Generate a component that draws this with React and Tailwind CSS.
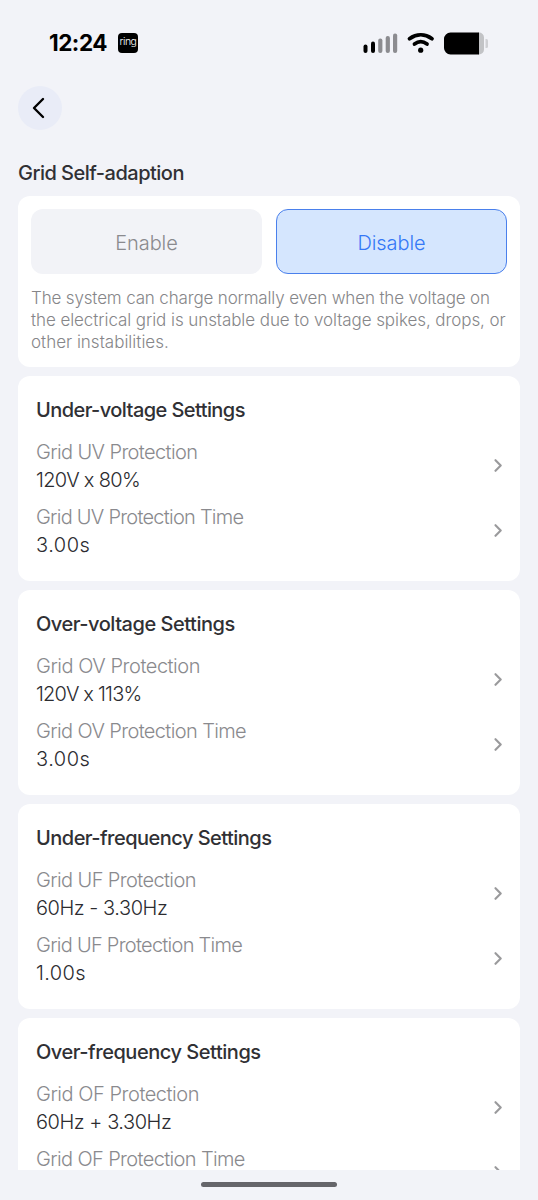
import React from "react";

const sections = [
  {
    title: "Under-voltage Settings",
    titleClass: "tracking-[-0.57px]",
    rows: [
      { label: "Grid UV Protection", labelClass: "tracking-[-0.62px]", value: "120V x 80%", valueClass: "tracking-[-0.7px]" },
      { label: "Grid UV Protection Time", labelClass: "tracking-[-0.75px]", value: "3.00s", valueClass: "tracking-[0.5px]" },
    ],
  },
  {
    title: "Over-voltage Settings",
    titleClass: "tracking-[-0.47px]",
    rows: [
      { label: "Grid OV Protection", labelClass: "tracking-[-0.46px]", value: "120V x 113%", valueClass: "tracking-[-0.8px]" },
      { label: "Grid OV Protection Time", labelClass: "tracking-[-0.62px]", value: "3.00s", valueClass: "tracking-[0.5px]" },
    ],
  },
  {
    title: "Under-frequency Settings",
    titleClass: "tracking-[-0.52px]",
    rows: [
      { label: "Grid UF Protection", labelClass: "tracking-[-0.61px]", value: "60Hz - 3.30Hz", valueClass: "tracking-[-0.46px]" },
      { label: "Grid UF Protection Time", labelClass: "tracking-[-0.73px]", value: "1.00s", valueClass: "tracking-[0.4px]" },
    ],
  },
  {
    title: "Over-frequency Settings",
    titleClass: "tracking-[-0.46px]",
    rows: [
      { label: "Grid OF Protection", labelClass: "tracking-[-0.46px]", value: "60Hz + 3.30Hz", valueClass: "tracking-[-0.46px]" },
      { label: "Grid OF Protection Time", labelClass: "tracking-[-0.63px]" },
    ],
  },
];

function StatusBar() {
  return (
    <header className="flex h-[86px] shrink-0 items-center pl-[49px] pr-[50px]">
      <span className="w-[69px] whitespace-nowrap text-[22.5px] leading-7 font-bold tracking-[-0.5px] text-black">12:24</span>
      <span className="flex h-5 w-5 items-center justify-center rounded-[4px] bg-black pb-0.5 text-[10.5px] leading-none font-light tracking-[-0.5px] text-white">ring</span>
      <svg className="ml-auto" width="125" height="24" viewBox="0 0 125 24" fill="none">
        <rect x="0.5" y="13.5" width="4" height="8.5" rx="2" fill="#000" />
        <rect x="8" y="10.5" width="4" height="11.5" rx="2" fill="#000" />
        <rect x="15.2" y="7.5" width="4.2" height="14.5" rx="2" fill="#8c8c90" />
        <rect x="22.7" y="5" width="4.2" height="17" rx="2" fill="#8c8c90" />
        <rect x="30" y="2.5" width="4.2" height="19.5" rx="2" fill="#8c8c90" />
        <g stroke="#000" strokeWidth="3.8" strokeLinecap="round">
          <path d="M46.500 7.700C53.500 2.600 62 2.600 69 7.700" />
          <path d="M51.500 13C55.500 10 60 10 64 13" />
        </g>
        <circle cx="57.7" cy="19.2" r="2.6" fill="#000" />
        <path d="M116 1.500h-1v22h1a5 5 0 0 0 5-5v-12a5 5 0 0 0-5-5Z" fill="#c2c3c6" />
        <path d="M87.500 1.500H116v22H87.500a6.500 6.500 0 0 1-6.500-6.500V8a6.500 6.500 0 0 1 6.500-6.500Z" fill="#000" />
        <path d="M122.500 8h1a1.500 1.500 0 0 1 1.500 1.500v6a1.500 1.500 0 0 1-1.500 1.500h-1Z" fill="#cfd0d4" />
      </svg>
    </header>
  );
}

function SettingRow({ row }) {
  return (
    <div className="flex h-14 justify-between">
      <div className="whitespace-nowrap text-[20px] leading-7 font-[350]">
        <div className={`text-[#8a8a8e] ${row.labelClass}`}>{row.label}</div>
        {row.value && <div className={`text-[#2c2c30] ${row.valueClass}`}>{row.value}</div>}
      </div>
      <svg className="mt-5" width="8" height="14" viewBox="0 0 8 14" fill="none" stroke="#9a9a9c" strokeWidth="2.100" strokeLinecap="round" strokeLinejoin="round">
        <path d="M1.500 2.200 6.700 7.500 1.500 12.800" />
      </svg>
    </div>
  );
}

function SettingsCard({ section }) {
  return (
    <section className="flex h-[205px] shrink-0 flex-col rounded-xl bg-white pt-5 pr-[18px] pl-[18px]">
      <h2 className={`mb-3.5 whitespace-nowrap text-[20px] leading-7 font-medium text-[#303034] ${section.titleClass}`}>{section.title}</h2>
      <div className="flex flex-col gap-[9px]">
        {section.rows.map((row) => (
          <SettingRow key={row.label} row={row} />
        ))}
      </div>
    </section>
  );
}

export default function App() {
  return (
    <div className="flex h-[1200px] w-[538px] flex-col overflow-hidden bg-[#f2f3f8] font-['Inter',sans-serif]">
      <StatusBar />
      <div className="px-[18px]">
        <button className="flex h-[44px] w-[44px] items-center justify-center rounded-full bg-[#e9ecf7]">
          <svg className="mr-1 mb-px" width="14" height="22" viewBox="0 0 14 22" fill="none" stroke="#000" strokeWidth="2.400" strokeLinecap="round" strokeLinejoin="round">
            <path d="M12 2 3 11l9 9" />
          </svg>
        </button>
        <h1 className="mt-[29px] mb-[9px] whitespace-nowrap text-[20px] leading-7 font-medium tracking-[-0.51px] text-[#303034]">Grid Self-adaption</h1>
      </div>
      <main className="flex h-[974px] shrink-0 flex-col gap-[9px] overflow-hidden px-[18px]">
        <section className="h-[171px] shrink-0 rounded-xl bg-white px-[13px] pt-[13px]">
          <div className="grid grid-cols-2 gap-3.5 text-[20px] font-[350] tracking-[-0.1px]">
            <button className="h-[65px] rounded-xl bg-[#f2f3f7] pt-[3px] text-[#8a8a8e]">Enable</button>
            <button className="h-[65px] rounded-xl border border-[#4a80ec] bg-[#d5e6fe] pt-[3px] text-[#3478f6]">Disable</button>
          </div>
          <p className="mt-[13px] whitespace-nowrap text-[17px] leading-[22px] font-[350] text-[#868689]">
            <span className="block tracking-[-0.155px]">The system can charge normally even when the voltage on</span>
            <span className="block tracking-[-0.075px]">the electrical grid is unstable due to voltage spikes, drops, or</span>
            <span className="block">other instabilities.</span>
          </p>
        </section>
        {sections.map((section) => (
          <SettingsCard key={section.title} section={section} />
        ))}
      </main>
      <footer className="flex h-[30px] shrink-0 justify-center pt-3">
        <div className="h-[5px] w-[136px] rounded-full bg-[#65656a]" />
      </footer>
    </div>
  );
}
